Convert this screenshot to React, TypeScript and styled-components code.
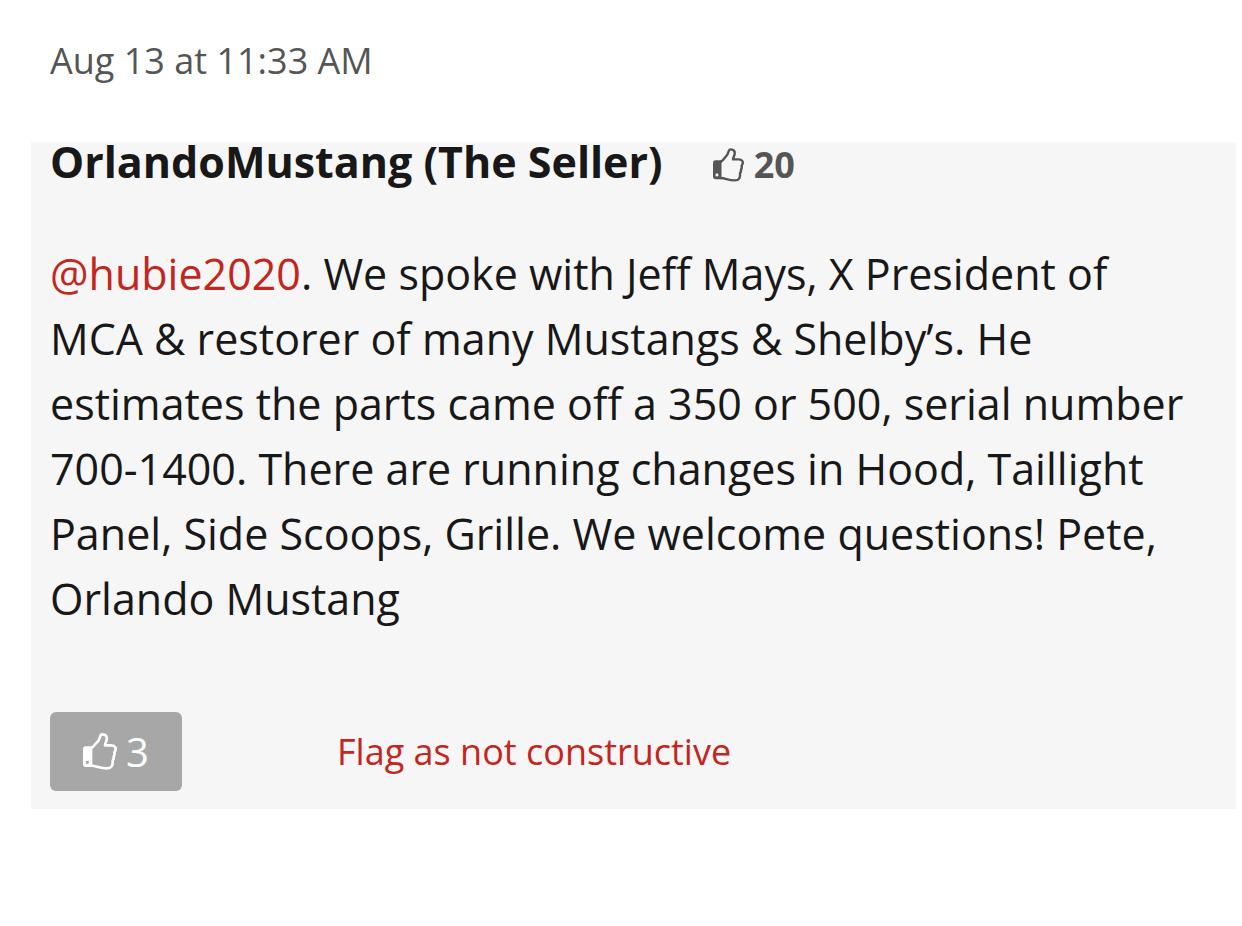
import React from 'react';
import styled, { createGlobalStyle } from 'styled-components';

const Global = createGlobalStyle`
  * { box-sizing: border-box; }
  body { margin: 0; background: #fff; color: #181818; font-family: "Open Sans", sans-serif; }
`;

const Page = styled.main`
  padding: 32px 6px 32px 31px;
`;

const Timestamp = styled.time`
  display: block;
  padding-left: 19px;
  margin-bottom: 52px;
  font-size: 36px;
  line-height: 58px;
  color: #555;
`;

const Comment = styled.article`
  padding: 0 40px 18px 19px;
  background: #f6f6f6;
`;

const Header = styled.header`
  display: flex;
  align-items: flex-start;
  gap: 50px;
`;

const Author = styled.h2`
  margin: 0;
  font-size: 43px;
  line-height: 40px;
  font-weight: 700;
`;

const Votes = styled.span`
  display: flex;
  align-items: center;
  gap: 10px;
  font-size: 36px;
  line-height: 46px;
  font-weight: 700;
  color: #555;
`;

const Body = styled.p`
  margin: 53px 0 81px;
  font-size: 43px;
  line-height: 65px;
`;

const Link = styled.a`
  color: #c4261d;
  text-decoration: none;
`;

const Actions = styled.footer`
  display: flex;
  align-items: center;
  gap: 155px;
  font-size: 36px;
  line-height: 52px;
`;

const LikeButton = styled.button`
  display: flex;
  align-items: center;
  justify-content: center;
  gap: 9px;
  width: 132px;
  height: 79px;
  padding: 0;
  border: 0;
  border-radius: 6px;
  background: #a7a7a7;
  color: #fff;
  font: inherit;
  font-size: 40px;
`;

const Icon = styled.svg<{ $width: number; $height: number }>`
  display: block;
  flex: none;
  width: ${(p) => p.$width}px;
  height: ${(p) => p.$height}px;
`;

const Thumb = ({ width, height }: { width: number; height: number }) => (
  <Icon $width={width} $height={height} viewBox="0 0 102 111" aria-hidden="true">
    <path
      fill="currentColor"
      fillRule="evenodd"
      d="M8 40h20v62H8q-8 0-8-8V48q0-8 8-8zM13 83a5 5 0 1 0 0 10a5 5 0 1 0 0-10z"
    />
    <path
      fill="none"
      stroke="currentColor"
      strokeWidth="8"
      strokeLinejoin="round"
      d="M25 45C32 42 37 32 43 27C53 20 48 4 58 4C69 4 73 11 71 20C70 27 66 31 66 37H84C96 37 100 45 97 52Q96 56 94 58Q96 65 92 71Q93 78 89 83C90 98 86 106 72 106C51 106 42 99 25 98"
    />
  </Icon>
);

export default function App() {
  return (
    <>
      <Global />
      <Page>
        <Timestamp>Aug 13 at 11:33 AM</Timestamp>
        <Comment>
          <Header>
            <Author>OrlandoMustang (The Seller)</Author>
            <Votes><Thumb width={31} height={34} />20</Votes>
          </Header>
          <Body>
            <Link href="#hubie2020">@hubie2020</Link>. We spoke with Jeff Mays, X President of MCA &amp; restorer of many Mustangs &amp; Shelby’s. He estimates the parts came off a 350 or 500, serial number 700-1400. There are running changes in Hood, Taillight Panel, Side Scoops, Grille. We welcome questions! Pete, Orlando Mustang
          </Body>
          <Actions>
            <LikeButton type="button"><Thumb width={34} height={37} />3</LikeButton>
            <Link href="#flag">Flag as not constructive</Link>
          </Actions>
        </Comment>
      </Page>
    </>
  );
}
